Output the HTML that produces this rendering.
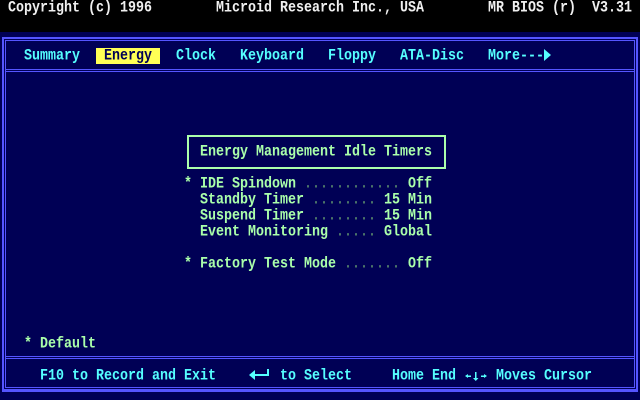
<!DOCTYPE html>
<html><head><meta charset="utf-8"><style>
html,body{margin:0;padding:0}
body{width:640px;height:400px;background:#000055;position:relative;overflow:hidden;font-family:"Liberation Mono","DejaVu Sans Mono",monospace;font-size:13.33px;font-weight:bold}
.t{position:absolute;white-space:pre;line-height:16px;height:16px;transform:scale(1,1.2);transform-origin:0 50%;margin-top:1px}
.w{color:#f0f0f0}.c{color:#55ffff}.g{color:#aaffaa}.d{color:#4f7a6a}
.ln{position:absolute;background:#5555ff}
</style></head><body>
<div style="position:absolute;left:0;top:0;width:640px;height:32px;background:#000"></div>
<div class="t w" style="left:8px;top:0">Copyright (c) 1996</div>
<div class="t w" style="left:216px;top:0">Microid Research Inc., USA</div>
<div class="t w" style="left:488px;top:0">MR BIOS (r)  V3.31</div>
<div class="ln" style="left:2px;top:37px;width:636px;height:2px"></div>
<div class="ln" style="left:2px;top:389px;width:636px;height:3px"></div>
<div class="ln" style="left:2px;top:37px;width:2px;height:355px"></div>
<div class="ln" style="left:636px;top:37px;width:2px;height:355px"></div>
<div class="ln" style="left:5px;top:40px;width:630px;height:1px"></div>
<div class="ln" style="left:5px;top:387px;width:630px;height:1px"></div>
<div class="ln" style="left:5px;top:40px;width:1px;height:348px"></div>
<div class="ln" style="left:634px;top:40px;width:1px;height:348px"></div>
<div class="ln" style="left:5px;top:69px;width:630px;height:1px"></div>
<div class="ln" style="left:5px;top:71px;width:630px;height:1px"></div>
<div class="ln" style="left:5px;top:356px;width:630px;height:1px"></div>
<div class="ln" style="left:5px;top:358px;width:630px;height:1px"></div>
<div style="position:absolute;left:96px;top:48px;width:64px;height:16px;background:#ffff55"></div>
<div class="t c" style="left:24px;top:48px">Summary</div>
<div class="t" style="left:104px;top:48px;color:#000055">Energy</div>
<div class="t c" style="left:176px;top:48px">Clock</div>
<div class="t c" style="left:240px;top:48px">Keyboard</div>
<div class="t c" style="left:328px;top:48px">Floppy</div>
<div class="t c" style="left:400px;top:48px">ATA-Disc</div>
<div class="t c" style="left:488px;top:48px">More---</div>
<svg style="position:absolute;left:544px;top:49px" width="8" height="12"><path d="M0 0L7 6L0 12Z" fill="#55ffff"/></svg>
<div style="position:absolute;left:187px;top:135px;width:255px;height:30px;border:2px solid #aaffaa"></div>
<div class="t g" style="left:200px;top:144px">Energy Management Idle Timers</div>
<div class="t g" style="left:184px;top:176px">* IDE Spindown <span class="d">............</span> Off</div>
<div class="t g" style="left:184px;top:192px">  Standby Timer <span class="d">........</span> 15 Min</div>
<div class="t g" style="left:184px;top:208px">  Suspend Timer <span class="d">........</span> 15 Min</div>
<div class="t g" style="left:184px;top:224px">  Event Monitoring <span class="d">.....</span> Global</div>
<div class="t g" style="left:184px;top:256px">* Factory Test Mode <span class="d">.......</span> Off</div>
<div class="t g" style="left:24px;top:336px">* Default</div>
<div class="t c" style="left:40px;top:368px">F10 to Record and Exit</div>
<svg style="position:absolute;left:248px;top:367px" width="24" height="16"><path d="M1 8L7 3L7 13Z" fill="#55ffff"/><rect x="6" y="7" width="15" height="2" fill="#55ffff"/><rect x="19" y="2" width="2" height="7" fill="#55ffff"/></svg>
<div class="t c" style="left:280px;top:368px">to Select</div>
<div class="t c" style="left:392px;top:368px">Home End</div>
<svg style="position:absolute;left:464px;top:368px" width="24" height="16" fill="#55ffff"><path d="M1 8L4 6L4 10Z"/><rect x="3" y="7.5" width="4" height="1.5"/><rect x="11" y="4" width="1.5" height="7"/><path d="M9 10L14.5 10L11.75 13Z"/><rect x="17" y="7.5" width="4" height="1.5"/><path d="M23 8L20 6L20 10Z"/></svg>
<div class="t c" style="left:496px;top:368px">Moves Cursor</div>
</body></html>
